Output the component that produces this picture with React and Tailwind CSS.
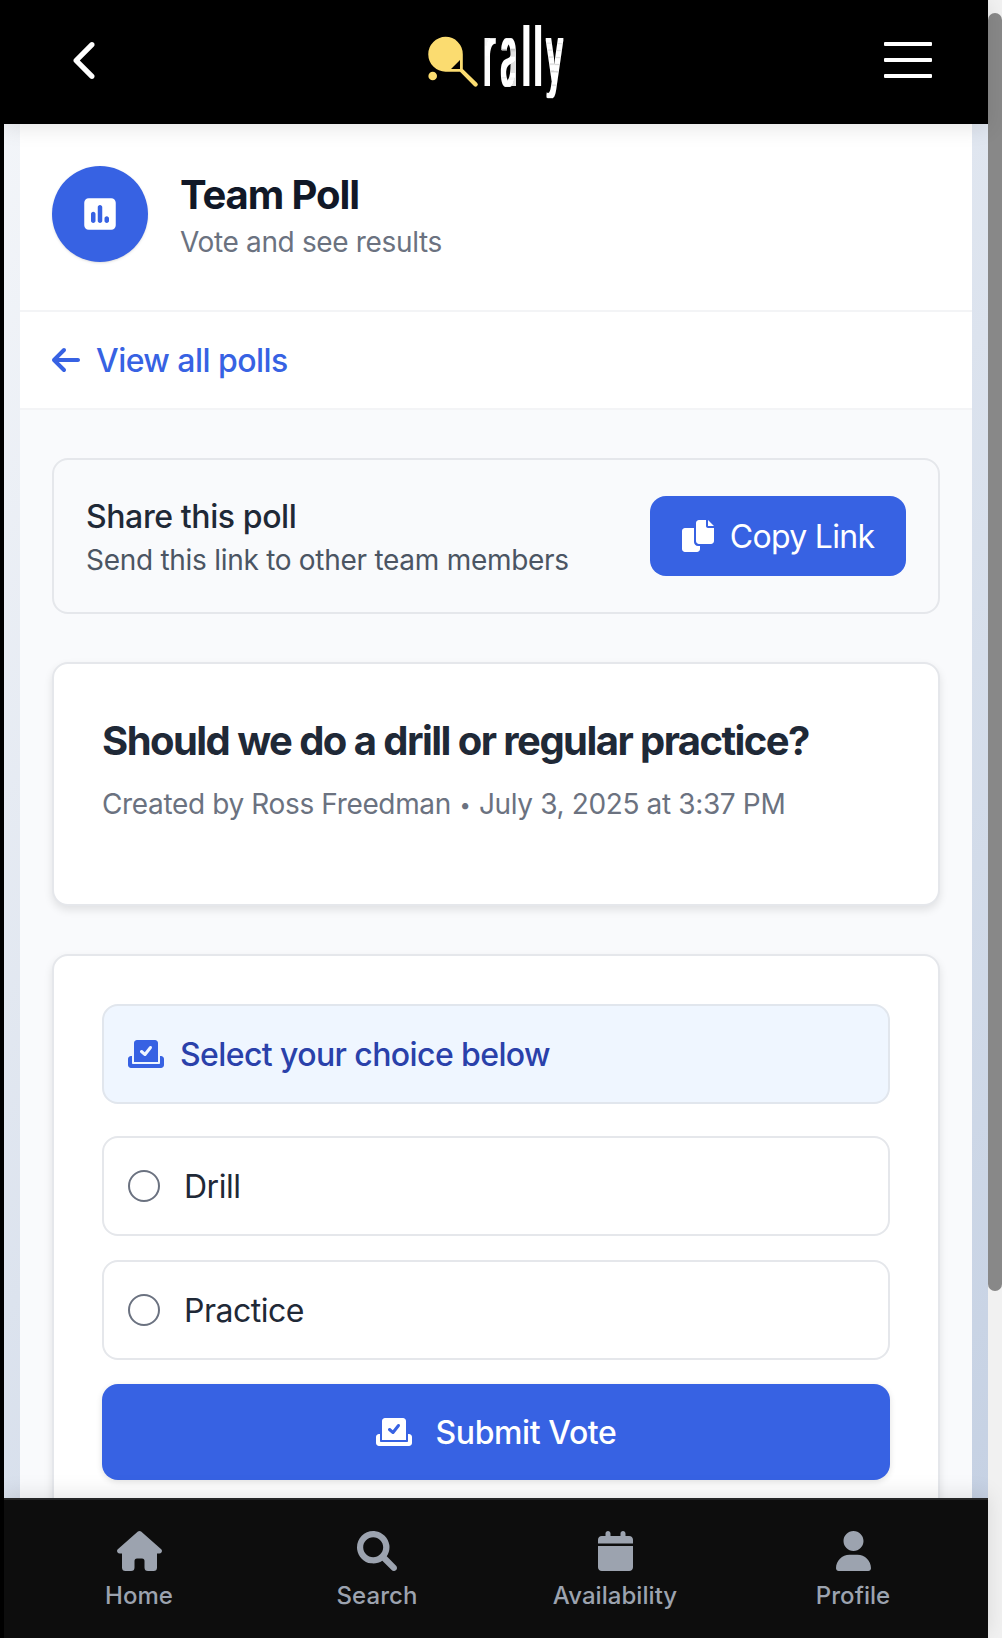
import { FaArrowLeft, FaCalendar, FaSquarePollVertical } from "react-icons/fa6";

function CopyIcon({ className }) {
  return (
    <svg className={className} viewBox="0 0 512 512" fill="currentColor">
      <path d="M384 96V0H272c-26.500 0-48 21.500-48 48v288c0 26.500 21.500 48 48 48h192c26.500 0 48-21.500 48-48V128h-96c-17.600 0-32-14.400-32-32zM416 0v96h96L416 0zM192 352V128H48c-26.500 0-48 21.500-48 48v288c0 26.500 21.500 48 48 48h192c26.500 0 48-21.500 48-48v-48h-32c-35.300 0-64-28.700-64-64z" />
    </svg>
  );
}

function BallotIcon({ className }) {
  return (
    <svg className={className} viewBox="0 0 576 512" fill="currentColor">
      <path d="M480 80c0-26.500-21.500-48-48-48H144c-26.500 0-48 21.500-48 48v304h384V80zM378.900 166.800l-88 112c-4 5.200-10 8.400-16.500 9.100-6.500.6-13-1.500-18-5.900l-56-48c-10-8.600-11.200-23.700-2.600-33.800 8.700-10 23.800-11.200 33.800-2.600l37 31.700 72.500-92.300c8.200-10.400 23.300-12.200 33.700-4 10.500 8.200 12.300 23.300 4.100 33.800zM528 288h-16v112c0 8.800-7.200 16-16 16H80c-8.800 0-16-7.200-16-16V288H48c-26.500 0-48 21.500-48 48v96c0 26.500 21.500 48 48 48h480c26.500 0 48-21.500 48-48v-96c0-26.500-21.500-48-48-48z" />
    </svg>
  );
}

function ChevronIcon({ className }) {
  return (
    <svg className={className} viewBox="0 32 256 448" fill="currentColor">
      <path d="M224 480c-8.188 0-16.380-3.125-22.620-9.375l-192-192c-12.500-12.500-12.500-32.750 0-45.250l192-192c12.500-12.500 32.750-12.500 45.250 0s12.500 32.750 0 45.250L77.250 256l169.400 169.400c12.500 12.500 12.500 32.750 0 45.250C240.400 476.900 232.200 480 224 480z" />
    </svg>
  );
}

function HomeIcon({ className }) {
  return (
    <svg className={className} viewBox="0 0 45 40" fill="currentColor">
      <path d="M20.900 .6Q22.500-.6 24.100 .6L44.200 18.300Q45.200 19.300 44.900 20.500Q44.400 22.400 42.500 22.400H40V36.500Q40 40 36.500 40H31Q27.500 40 27.500 36.500V30Q27.500 27.500 25 27.500H20Q17.500 27.500 17.500 30V36.500Q17.500 40 14 40H8.500Q5 40 5 36.500V22.400H2.500Q.6 22.400 .1 20.500Q-.2 19.300 .8 18.300Z" />
    </svg>
  );
}

function SearchIcon({ className }) {
  return (
    <svg className={className} viewBox="0 0 512 512" fill="currentColor">
      <path d="M500.300 443.700l-119.700-119.700c27.220-40.410 40.650-90.900 33.460-144.700C401.800 87.790 326.800 13.320 235.200 1.723C99.010-15.510-15.510 99.010 1.724 235.200c11.600 91.640 86.080 166.700 177.600 178.900c53.800 7.189 104.300-6.236 144.700-33.460l119.700 119.700c15.620 15.620 40.950 15.620 56.570 0C515.900 484.700 515.900 459.300 500.300 443.700zM79.100 208c0-70.580 57.420-128 128-128s128 57.420 128 128c0 70.580-57.420 128-128 128S79.100 278.600 79.100 208z" />
    </svg>
  );
}

function ProfileIcon({ className }) {
  return (
    <svg className={className} viewBox="0 0 448 512" fill="currentColor">
      <path d="M224 256c70.700 0 128-57.310 128-128s-57.300-128-128-128C153.300 0 96 57.310 96 128S153.300 256 224 256zM274.700 304H173.300C77.610 304 0 381.600 0 477.300c0 19.140 15.520 34.670 34.660 34.670h378.700C432.500 512 448 496.500 448 477.300C448 381.600 370.400 304 274.700 304z" />
    </svg>
  );
}

function Logo() {
  return (
    <svg className="h-[124px] w-[140px]" viewBox="426 0 140 124">
      <defs>
        <filter id="thicken" filterUnits="userSpaceOnUse" x="470" y="0" width="110" height="124">
          <feMorphology operator="dilate" radius="2 1" />
        </filter>
      </defs>
      <g fill="#fbdc70">
        <path
          fillRule="evenodd"
          d="M445.600 36.800A17.200 17.400 0 0 1 462.800 54.200V69L477.200 83A1.900 1.900 0 0 1 474 86L460 71.700H445.600A17.300 17.400 0 0 1 445.600 36.800ZM460 60L451 69H460Z"
        />
        <circle cx="432.700" cy="76" r="4.300" />
      </g>
      <g fill="white" fontFamily="Inter, sans-serif" fontWeight="200" fontSize="79" filter="url(#thicken)">
        <text transform="translate(483.800 85) scale(0.400 1.060)">r</text>
        <text transform="translate(501.600 85) scale(0.350 1.060)">a</text>
        <text transform="translate(521.600 85) scale(0.550 1.020)">l</text>
        <text transform="translate(533.300 85) scale(0.550 1.020)">l</text>
        <text transform="translate(546.400 81) scale(0.370 0.980)">y</text>
      </g>
    </svg>
  );
}

function Header() {
  return (
    <header className="relative z-10 flex h-[124px] shrink-0 items-start justify-between bg-black shadow-[0_4px_20px_rgba(0,0,0,0.1)]">
      <button className="flex h-[120px] w-[160px] items-center justify-center text-white">
        <ChevronIcon className="h-[37px] w-[22px]" />
      </button>
      <Logo />
      <button className="flex h-[120px] w-[160px] flex-col items-center justify-center gap-3">
        <span className="h-1 w-12 rounded-[1px] bg-white" />
        <span className="h-1 w-12 rounded-[1px] bg-white" />
        <span className="h-1 w-12 rounded-[1px] bg-white" />
      </button>
    </header>
  );
}

function Choice({ label }) {
  return (
    <div className="flex h-[100px] items-center gap-6 rounded-2xl border-2 border-[#e5e7eb] bg-white px-6 text-[32px] tracking-[-0.5px] text-[#1f2937]">
      <span className="size-8 rounded-full border-2 border-[#6b7280]" />
      <span className="pt-0.5">{label}</span>
    </div>
  );
}

const NAV = [
  { label: "Home", icon: HomeIcon, size: "w-[45px]" },
  { label: "Search", icon: SearchIcon, size: "w-10" },
  { label: "Availability", icon: FaCalendar, size: "w-[35px]" },
  { label: "Profile", icon: ProfileIcon, size: "w-[35px]" },
];

function BottomNav() {
  return (
    <nav className="relative z-10 flex h-[140px] shrink-0 border-t-2 border-[#252627] bg-[#0d0d0d] px-4 shadow-[0_-4px_20px_rgba(0,0,0,0.1)]">
      {NAV.map(({ label, icon: Icon, size }) => (
        <div key={label} className="flex flex-1 flex-col items-center pt-[31px] text-[#9ca3af]">
          <Icon className={`h-10 ${size}`} />
          <span className="mt-[9px] text-[24px] leading-8 font-medium tracking-[0.05px]">{label}</span>
        </div>
      ))}
    </nav>
  );
}

export default function App() {
  return (
    <div className="flex h-[1638px] w-[1002px] overflow-hidden bg-black pl-1 font-['Inter',sans-serif]">
      <div className="flex w-[984px] shrink-0 flex-col bg-[linear-gradient(135deg,#f5f7fa,#c3cfe2)]">
        <Header />
        <main className="mx-4 min-h-0 flex-1 overflow-hidden bg-[#f9fafc]">
          <section className="flex h-[188px] gap-8 border-b-2 border-[#f3f4f6] bg-white px-8 pt-[42px]">
            <div className="flex size-24 items-center justify-center rounded-full bg-[#3762e3] text-white shadow-sm">
              <FaSquarePollVertical className="h-9 w-8" />
            </div>
            <div className="pt-1">
              <h1 className="text-[40px] leading-[50px] font-bold tracking-[-1.1px] text-[#111827]">Team Poll</h1>
              <p className="mt-0.5 text-[28px] leading-10 tracking-[-0.35px] text-[#6b7280]">Vote and see results</p>
            </div>
          </section>
          <section className="flex h-[98px] items-center gap-4 border-b-2 border-[#f3f4f6] bg-white px-8 text-[32px] font-medium tracking-[-0.55px] text-[#3762e3]">
            <FaArrowLeft className="h-8 w-7" />
            <span className="pt-0.5">View all polls</span>
          </section>
          <div className="flex flex-col gap-12 px-8 pt-12">
            <section className="flex h-[156px] items-center justify-between rounded-2xl border-2 border-[#e5e7eb] px-8">
              <div className="pt-[3px]">
                <h2 className="text-[32px] leading-[44px] font-medium tracking-[-0.4px] text-[#1f2937]">Share this poll</h2>
                <p className="text-[28px] leading-[42px] tracking-[-0.28px] text-[#4b5563]">Send this link to other team members</p>
              </div>
              <button className="flex h-20 w-64 items-center justify-center gap-4 rounded-2xl bg-[#3762e3] text-[32px] tracking-[-0.7px] text-white">
                <CopyIcon className="size-8" />
                <span className="pt-0.5">Copy Link</span>
              </button>
            </section>
            <section className="h-[244px] rounded-2xl border-2 border-[#e5e7eb] bg-white px-12 pt-[47px] shadow-[0_4px_8px_rgba(0,0,0,0.1)]">
              <h2 className="text-[40px] leading-[60px] font-bold tracking-[-1.56px] text-[#1f2937]">
                Should we do a drill or regular practice?
              </h2>
              <p className="mt-[13px] text-[28px] leading-10 tracking-[-0.36px] text-[#6b7280]">
                Created by Ross Freedman <span className="inline-block w-[13px] text-center align-[2px] text-[20px] leading-none">•</span> July 3, 2025 at 3:37 PM
              </p>
            </section>
            <section className="h-[660px] rounded-2xl border-2 border-[#e5e7eb] bg-white px-12 pt-12 shadow-[0_4px_8px_rgba(0,0,0,0.1)]">
              <div className="mb-8 flex h-[100px] items-center gap-4 rounded-2xl border-2 border-[#e1e6ed] bg-[#eff6ff] px-6 text-[32px] font-medium tracking-[-0.6px] text-[#2a41aa]">
                <BallotIcon className="h-8 w-9 text-[#3762e3]" />
                <span className="pt-0.5">Select your choice below</span>
              </div>
              <div className="flex flex-col gap-6">
                <Choice label="Drill" />
                <Choice label="Practice" />
                <button className="flex h-24 items-center justify-center gap-6 rounded-2xl bg-[#3762e3] text-[32px] font-medium tracking-[-0.4px] text-white shadow-[0_2px_6px_rgba(0,0,0,0.12)]">
                  <BallotIcon className="h-8 w-9" />
                  <span className="pt-0.5">Submit Vote</span>
                </button>
              </div>
            </section>
          </div>
        </main>
        <BottomNav />
      </div>
      <div className="w-[14px] shrink-0 bg-[#f1f1f1] pt-[13px]">
        <div className="h-[1278px] rounded-[7px] bg-[#888888]" />
      </div>
    </div>
  );
}
